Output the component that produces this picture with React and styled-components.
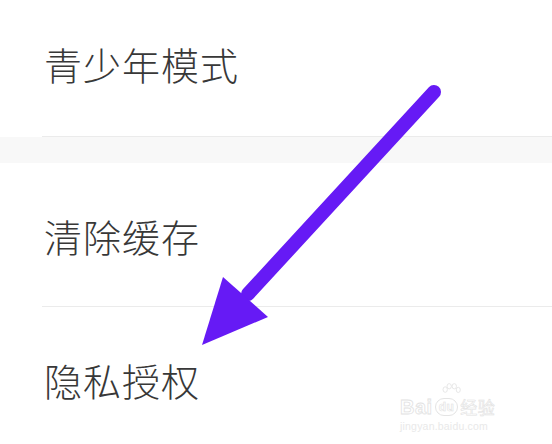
import React from 'react'
import styled, { createGlobalStyle } from 'styled-components'

const GlobalStyle = createGlobalStyle`
  html, body {
    margin: 0;
    padding: 0;
    background: #ffffff;
  }
  body {
    width: 552px;
    height: 444px;
    overflow: hidden;
    font-family: "Noto Sans CJK SC", "Noto Sans", sans-serif;
  }
`

const items = [
  { label: '青少年模式', height: 137, offset: -5 },
  { label: '清除缓存', height: 144, offset: 0, gapBefore: true },
  { label: '隐私授权', height: 144, offset: 0 },
]

const App = () => {
  return (
    <Container>
      <GlobalStyle />
      {items.map((item, i) => (
        <React.Fragment key={item.label}>
          {item.gapBefore && <Band />}
          <Row $height={item.height} $last={i === items.length - 1}>
            <Label $offset={item.offset}>{item.label}</Label>
          </Row>
        </React.Fragment>
      ))}

      <Arrow width="552" height="444" viewBox="0 0 552 444">
        <line
          x1="434"
          y1="92"
          x2="248"
          y2="294"
          stroke="#661af5"
          strokeWidth="14"
          strokeLinecap="round"
        />
        <polygon points="202,345 223,277 268,317" fill="#661af5" />
      </Arrow>

      <Watermark>
        <Paw viewBox="0 0 30 22">
          <ellipse cx="7" cy="9" rx="3" ry="3.8" />
          <ellipse cx="12.5" cy="4.5" rx="3" ry="3.6" />
          <ellipse cx="19.5" cy="4.5" rx="3" ry="3.6" />
          <ellipse cx="25" cy="9.5" rx="2.8" ry="3.6" />
        </Paw>
        <Brand>
          <span>Bai</span>
          <Du>du</Du>
          <Cn>经验</Cn>
        </Brand>
        <Site>jingyan.baidu.com</Site>
      </Watermark>
    </Container>
  )
}

export default App

const Container = styled.div`
  position: relative;
  width: 552px;
  height: 444px;
  overflow: hidden;
  background: #ffffff;
`

const Row = styled.div`
  height: ${(p) => p.$height}px;
  display: flex;
  align-items: center;
  padding-left: 44px;
  position: relative;

  &::after {
    content: '';
    display: ${(p) => (p.$last ? 'none' : 'block')};
    position: absolute;
    left: 42px;
    right: 0;
    bottom: 0;
    height: 1px;
    background: #ebebeb;
  }
`

const Label = styled.span`
  font-size: 38px;
  font-weight: 300;
  color: #383838;
  letter-spacing: 1px;
  transform: translateY(${(p) => p.$offset}px);
`

const Band = styled.div`
  height: 26px;
  background: #f8f8f8;
`

const Arrow = styled.svg`
  position: absolute;
  left: 0;
  top: 0;
  pointer-events: none;
`

const Watermark = styled.div`
  position: absolute;
  left: 400px;
  top: 383px;
  width: 98px;
  display: flex;
  flex-direction: column;
  align-items: flex-start;
  font-family: "Liberation Sans", sans-serif;
`

const Paw = styled.svg`
  width: 22px;
  height: 16px;
  margin-left: 40px;
  fill: none;
  stroke: #e6e6e6;
  stroke-width: 1.3;
`

const Brand = styled.div`
  display: flex;
  align-items: center;
  margin-top: -2px;
  font-size: 20px;
  font-weight: 700;
  line-height: 20px;
  white-space: nowrap;
  color: #ffffff;
  -webkit-text-stroke: 0.8px #e2e2e2;
  letter-spacing: 0.5px;
`

const Du = styled.span`
  font-size: 12px;
  line-height: 16px;
  padding: 0 3px;
  margin: 0 2px;
  border: 1.3px solid #e4e4e4;
  border-radius: 9px;
  -webkit-text-stroke: 0.6px #e2e2e2;
`

const Cn = styled.span`
  font-family: "Noto Sans CJK SC", sans-serif;
  font-size: 17px;
  font-weight: 400;
  -webkit-text-stroke: 0.6px #e2e2e2;
`

const Site = styled.div`
  margin-top: 3px;
  font-size: 10.5px;
  white-space: nowrap;
  color: #e9e9e9;
  letter-spacing: 0.2px;
`
